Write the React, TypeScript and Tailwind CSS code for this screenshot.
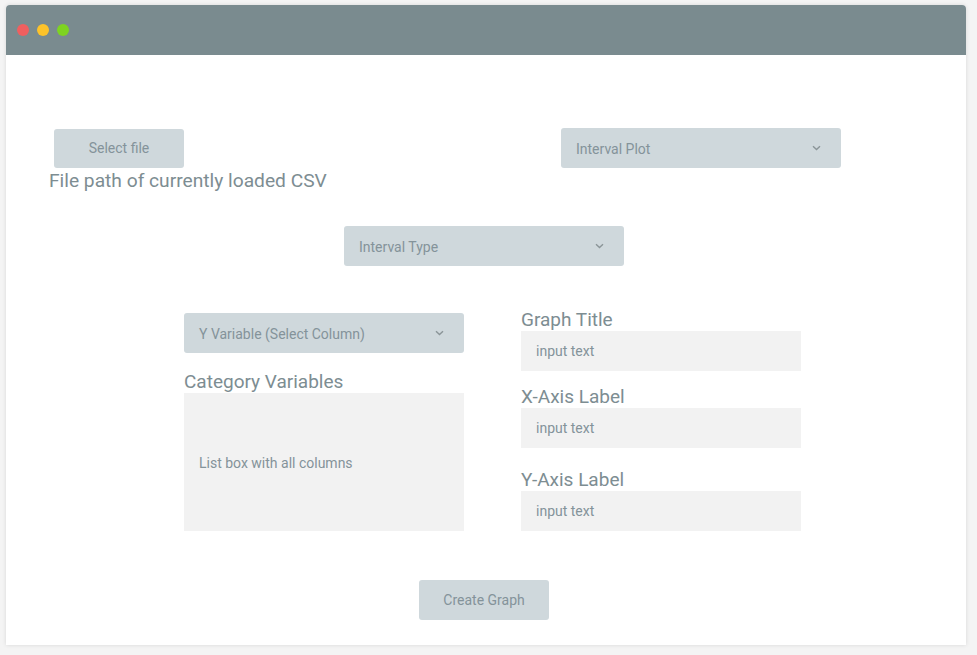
import React from "react"

const font = { fontFamily: "Roboto, 'Liberation Sans', sans-serif" }

function Chevron() {
    return (
        <svg width="9" height="6" viewBox="0 0 9 6" className="shrink-0">
            <path d="M1 1.2 L4.5 4.6 L8 1.2" fill="none" stroke="#8b9598" strokeWidth="1.4" />
        </svg>
    )
}

function Select({ label }: { label: string }) {
    return (
        <div className="flex h-[40px] w-[280px] items-center justify-between rounded-[3px] bg-[#cfd8dc] pl-[15px] pr-[20px] text-[14px] text-[#84939a]">
            <span className="translate-y-[1px]">{label}</span>
            <Chevron />
        </div>
    )
}

function Field({ label, top }: { label: string, top: string }) {
    return (
        <div className={top}>
            <div className="text-[19px] leading-[22px] text-[#7d8d92]">{label}</div>
            <div className="flex h-[40px] w-[280px] items-center bg-[#f2f2f2] pl-[15px] text-[14px] text-[#84939a]">
                input text
            </div>
        </div>
    )
}

export default function App() {
    return (
        <div className="min-h-screen bg-[#f4f4f4] pt-[5px] pl-[6px] pr-[11px] pb-[10px]" style={font}>
            <div className="h-[640px] w-[960px] overflow-hidden rounded-t-[4px] bg-white shadow-[0_0_4px_rgba(0,0,0,0.12)]">
                {/* barra de titulo */}
                <div className="flex h-[50px] items-center gap-[8px] bg-[#7a8b8f] pl-[11px]">
                    <span className="h-[12px] w-[12px] rounded-full bg-[#f05f5f]" />
                    <span className="h-[12px] w-[12px] rounded-full bg-[#fdc32a]" />
                    <span className="h-[12px] w-[12px] rounded-full bg-[#7ed321]" />
                </div>

                {/* fila 1 */}
                <div className="flex items-start pt-[73px]">
                    <div className="w-[555px] pl-[43px]">
                        <button className="ml-[5px] mt-[1px] h-[39px] w-[130px] rounded-[3px] bg-[#cfd8dc] text-[14px] text-[#84939a]">
                            Select file
                        </button>
                        <div className="text-[19.2px] leading-[25px] text-[#7d8d92]">File path of currently loaded CSV</div>
                    </div>
                    <Select label="Interval Plot" />
                </div>

                {/* fila 2 */}
                <div className="mt-[33px] pl-[338px]">
                    <Select label="Interval Type" />
                </div>

                {/* fila 3 */}
                <div className="mt-[47px] flex gap-[57px] pl-[178px]">
                    <div>
                        <Select label="Y Variable (Select Column)" />
                        <div className="mt-[18px] text-[19px] leading-[22px] text-[#7d8d92]">Category Variables</div>
                        <div className="flex h-[138px] w-[280px] items-center bg-[#f2f2f2] pl-[15px] text-[14px] text-[#84939a]">
                            <span className="translate-y-[1px]">List box with all columns</span>
                        </div>
                    </div>
                    <div className="-mt-[4px]">
                        <Field label="Graph Title" top="" />
                        <Field label="X-Axis Label" top="mt-[15px]" />
                        <Field label="Y-Axis Label" top="mt-[21px]" />
                    </div>
                </div>

                {/* boton */}
                <div className="mt-[49px] pl-[413px]">
                    <button className="h-[40px] w-[130px] rounded-[3px] bg-[#cfd8dc] text-[14px] text-[#84939a]">
                        Create Graph
                    </button>
                </div>
            </div>
        </div>
    )
}
